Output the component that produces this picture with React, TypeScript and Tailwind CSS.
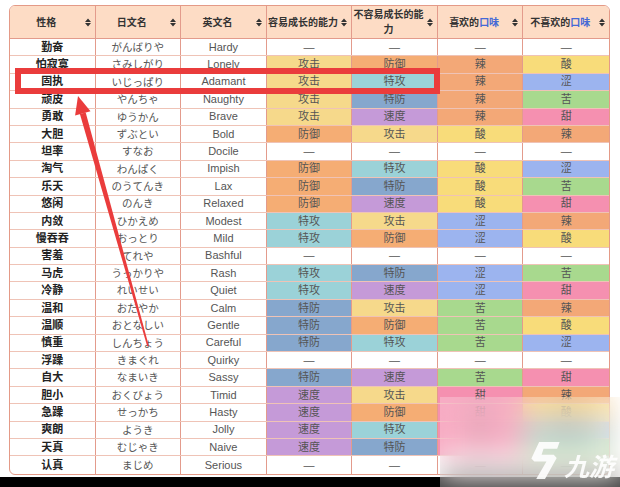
const cellColor: Record<string, string> = {
  攻击: 'bg-[#f6d98b]',
  防御: 'bg-[#f5ad74]',
  特攻: 'bg-[#9bd2d8]',
  特防: 'bg-[#86a7cd]',
  速度: 'bg-[#c59ad8]',
  辣: 'bg-[#f3a877]',
  酸: 'bg-[#f8dc7a]',
  涩: 'bg-[#9cb4ef]',
  苦: 'bg-[#a8d98e]',
  甜: 'bg-[#f590b0]',
}

const natures: string[][] = [
  ['勤奋', 'がんばりや', 'Hardy', '—', '—', '—', '—'],
  ['怕寂寞', 'さみしがり', 'Lonely', '攻击', '防御', '辣', '酸'],
  ['固执', 'いじっぱり', 'Adamant', '攻击', '特攻', '辣', '涩'],
  ['顽皮', 'やんちゃ', 'Naughty', '攻击', '特防', '辣', '苦'],
  ['勇敢', 'ゆうかん', 'Brave', '攻击', '速度', '辣', '甜'],
  ['大胆', 'ずぶとい', 'Bold', '防御', '攻击', '酸', '辣'],
  ['坦率', 'すなお', 'Docile', '—', '—', '—', '—'],
  ['淘气', 'わんぱく', 'Impish', '防御', '特攻', '酸', '涩'],
  ['乐天', 'のうてんき', 'Lax', '防御', '特防', '酸', '苦'],
  ['悠闲', 'のんき', 'Relaxed', '防御', '速度', '酸', '甜'],
  ['内敛', 'ひかえめ', 'Modest', '特攻', '攻击', '涩', '辣'],
  ['慢吞吞', 'おっとり', 'Mild', '特攻', '防御', '涩', '酸'],
  ['害羞', 'てれや', 'Bashful', '—', '—', '—', '—'],
  ['马虎', 'うっかりや', 'Rash', '特攻', '特防', '涩', '苦'],
  ['冷静', 'れいせい', 'Quiet', '特攻', '速度', '涩', '甜'],
  ['温和', 'おだやか', 'Calm', '特防', '攻击', '苦', '辣'],
  ['温顺', 'おとなしい', 'Gentle', '特防', '防御', '苦', '酸'],
  ['慎重', 'しんちょう', 'Careful', '特防', '特攻', '苦', '涩'],
  ['浮躁', 'きまぐれ', 'Quirky', '—', '—', '—', '—'],
  ['自大', 'なまいき', 'Sassy', '特防', '速度', '苦', '甜'],
  ['胆小', 'おくびょう', 'Timid', '速度', '攻击', '甜', '辣'],
  ['急躁', 'せっかち', 'Hasty', '速度', '防御', '甜', '酸'],
  ['爽朗', 'ようき', 'Jolly', '速度', '特攻', '甜', '涩'],
  ['天真', 'むじゃき', 'Naive', '速度', '特防', '甜', '苦'],
  ['认真', 'まじめ', 'Serious', '—', '—', '—', '—'],
]

const font = { fontFamily: '"Liberation Sans", "Noto Sans CJK SC", sans-serif' }

function SortIcon() {
  return (
    <svg width="6" height="9" viewBox="0 0 6 9" className="shrink-0">
      <path d="M0 4 L3 0.5 L6 4 Z M0 5 L3 8.5 L6 5 Z" fill="#333" />
    </svg>
  )
}

function HeaderCell({ children, last }: { children: React.ReactNode; last?: boolean }) {
  return (
    <div
      className={
        'flex items-center gap-[3px] pl-[1px] pr-[4px] ' +
        (last ? '' : 'border-r border-[#e39b8c]')
      }
    >
      <span className="flex-1 text-center text-[10px] leading-[15px] font-bold text-[#333]">{children}</span>
      <SortIcon />
    </div>
  )
}

const Taste = () => <span className="text-[#4569d6]">口味</span>

export default function App() {
  return (
    <div className="relative w-[620px] h-[487px] bg-white overflow-hidden flex flex-col" style={font}>
      <div className="pt-[5px] pl-[9px]">
        <div className="w-[601px] rounded-[6px] border border-[#e49a87] overflow-hidden">
          {/* header */}
          <div className="grid grid-cols-7 h-[33px] bg-[#fddcc5] border-b border-[#e39b8c]">
            <HeaderCell>性格</HeaderCell>
            <HeaderCell>日文名</HeaderCell>
            <HeaderCell>英文名</HeaderCell>
            <HeaderCell>容易成长的能力</HeaderCell>
            <HeaderCell>不容易成长的能力</HeaderCell>
            <HeaderCell>
              喜欢的<Taste />
            </HeaderCell>
            <HeaderCell last>
              不喜欢的<Taste />
            </HeaderCell>
          </div>

          {/* rows */}
          {natures.map((row, i) => (
            <div
              key={row[2]}
              className={
                'grid grid-cols-7 h-[17.4px] ' + (i < natures.length - 1 ? 'border-b border-[#efc3b6]' : '')
              }
            >
              {row.map((cell, j) => (
                <div
                  key={j}
                  className={
                    'flex items-center justify-center text-[11px] leading-none ' +
                    (j < 6 ? 'border-r border-[#e39b8c] ' : '') +
                    (j === 0 ? 'font-bold text-[#222] ' : 'text-[#555] ') +
                    (cellColor[cell] ?? '')
                  }
                  style={j === 1 ? { fontFamily: '"Noto Sans CJK JP", sans-serif', fontSize: '10.5px' } : undefined}
                >
                  {cell}
                </div>
              ))}
            </div>
          ))}
        </div>
      </div>

      <div className="mt-auto h-[10px] bg-black" />

      {/* red highlight box */}
      <div className="absolute left-[15px] top-[68px] w-[425px] h-[26px] border-[6px] border-[#ea3c3c]" />

      {/* arrow */}
      <svg className="absolute left-0 top-0 pointer-events-none" width="620" height="487">
        <polygon points="78,96 90.5,111.2 75.1,115.4" fill="#ea3c3c" />
        <polygon points="85.7,112.5 79.9,114.1 147.2,346.2 148.8,345.8" fill="#ea3c3c" />
      </svg>

      {/* watermark */}
      <div className="absolute left-[440px] top-[397px] right-0 bottom-0 backdrop-blur-[14px] bg-white/25">
        <div className="absolute left-[90px] top-[45px] flex items-end gap-[4px]">
          <svg width="30" height="37" viewBox="0 0 30 38">
            <path
              d="M9 0 H30 L27.5 7 H13.5 L11.5 13 H24 L27 16.5 L15 38 H6 L16.5 20 H4 L1 17 Z"
              fill="white"
              fillOpacity="0.9"
            />
          </svg>
          <span
            className="text-[25px] leading-none font-bold italic text-white/90 mb-[1px]"
            style={{ fontFamily: '"Noto Sans CJK SC", sans-serif' }}
          >
            九游
          </span>
        </div>
      </div>
    </div>
  )
}
